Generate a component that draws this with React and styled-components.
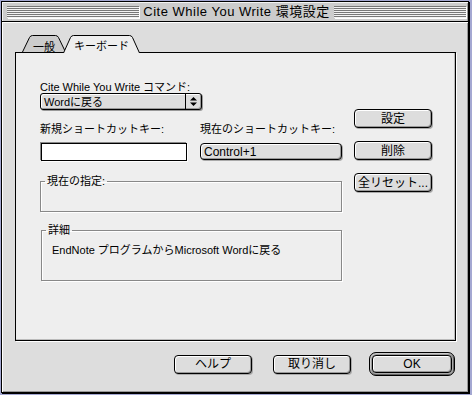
import React from 'react';
import styled, { createGlobalStyle } from 'styled-components';

const GlobalStyle = createGlobalStyle`
  html, body {
    margin: 0;
    padding: 0;
  }
  body {
    width: 472px;
    height: 395px;
    overflow: hidden;
    background: #a4a8d2;
    font-family: "Liberation Sans", "Noto Sans CJK JP", sans-serif;
    font-size: 11px;
    color: #000;
  }
`;

const Window = styled.div`
  box-sizing: border-box;
  width: 468px;
  height: 392px;
  margin: 1px 0 0 1px;
  border: 1px solid #000;
  box-shadow: 1px 1px 0 #000;
  background: #dddddd;
  display: flex;
  flex-direction: column;
`;

const TitleBar = styled.div`
  box-sizing: border-box;
  height: 20px;
  border-bottom: 1px solid #000;
  background: #cccccc;
  box-shadow: inset 1px 1px 0 #f4f4f4, inset -1px 0 0 #999;
  display: flex;
  align-items: center;
  padding: 0 2px 0 5px;
`;

const Stripes = styled.div`
  flex: 1;
  height: 12px;
  background: repeating-linear-gradient(to bottom, #777 0 1px, #f2f2f2 1px 2px);
  box-shadow: 1px 1px 0 #fff;
`;

const Title = styled.div`
  padding: 0 4px;
  font-size: 13px;
  line-height: 16px;
  letter-spacing: 0.5px;
`;

const Body = styled.div`
  flex: 1;
  box-shadow: inset 1px 1px 0 #fff, inset -1px -1px 0 #999;
  padding: 13px 11px 0 13px;
  display: flex;
  flex-direction: column;
`;

const TabRow = styled.div`
  position: relative;
  z-index: 1;
  display: flex;
  height: 18px;
  padding-left: 7px;
  margin-bottom: -1px;
`;

const TabShape = styled.svg`
  position: absolute;
  left: 0;
  top: 0;
`;

const Tab = styled.div`
  position: relative;
  width: ${(p) => p.$w}px;
  height: 18px;
  margin-left: ${(p) => (p.$first ? 0 : -3)}px;
  text-align: center;

  span {
    position: relative;
    display: block;
    padding-top: ${(p) => (p.$active ? 5 : 6)}px;
    line-height: 12px;
  }
`;

const Panel = styled.div`
  box-sizing: border-box;
  width: 441px;
  height: 289px;
  border: 1px solid #000;
  box-shadow: 1px 1px 0 #fff, inset -1px -1px 0 #bbb;
  background: #eeeeee;
  padding: 28px 0 0 24px;
  display: grid;
  grid-template-columns: 302px 78px;
  column-gap: 12px;
  align-items: start;
`;

const LeftColumn = styled.div`
  display: flex;
  flex-direction: column;
`;

const SideColumn = styled.div`
  margin-top: 28px;
  display: flex;
  flex-direction: column;
  gap: 13px;
`;

const Label = styled.div`
  line-height: 12px;
  height: 12px;
  white-space: nowrap;
`;

const Popup = styled.div`
  box-sizing: border-box;
  width: 162px;
  height: 17px;
  border: 1px solid #000;
  border-radius: 3px;
  background: #dddddd;
  box-shadow: inset 1px 1px 0 #fff, inset -1px -1px 0 #999, 1px 1px 0 #999;
  display: flex;
  align-items: center;
`;

const PopupText = styled.div`
  flex: 1;
  padding-left: 3px;
  line-height: 12px;
`;

const PopupArrow = styled.div`
  width: 15px;
  height: 100%;
  border-left: 1px solid #000;
  display: flex;
  align-items: center;
  justify-content: center;
`;

const ShortcutRow = styled.div`
  margin-top: 13px;
  display: grid;
  grid-template-columns: 160px 142px;
  row-gap: 8px;
`;

const TextInput = styled.div`
  box-sizing: border-box;
  margin-left: 1px;
  width: 146px;
  height: 18px;
  border: 1px solid #000;
  background: #fff;
  box-shadow: -1px -1px 0 #888, 1px 1px 0 #fff;
`;

const Button = styled.div`
  box-sizing: border-box;
  width: ${(p) => p.$w || 78}px;
  height: ${(p) => p.$h || 19}px;
  margin-right: ${(p) => p.$mr || 0}px;
  border: 1px solid #000;
  border-radius: 4px;
  background: #dddddd;
  box-shadow: inset 1px 1px 0 #fff, inset -1px -1px 0 #999, 1px 1px 0 #aaa;
  display: flex;
  align-items: center;
  justify-content: ${(p) => (p.$left ? 'flex-start' : 'center')};
  padding-left: ${(p) => (p.$left ? 3 : 0)}px;
  font-size: 12px;
  line-height: 14px;
  white-space: nowrap;
`;

const DefaultRing = styled.div`
  box-sizing: border-box;
  padding: 2px;
  border: 1px solid #000;
  border-radius: 7px;
  background: #999;
  box-shadow: inset 1px 1px 0 #ccc, inset -1px -1px 0 #666;
`;

const Group = styled.fieldset`
  margin: ${(p) => p.$top}px 0 0 ${(p) => p.$indent || 0}px;
  padding: 0;
  min-width: 0;
  border: 1px solid #888;
  box-shadow: 1px 1px 0 #fff, inset 1px 1px 0 #fff;

  legend {
    margin-left: 4px;
    padding: 0 2px;
    line-height: 12px;
  }
`;

const GroupBody = styled.div`
  height: ${(p) => p.$h}px;
  box-sizing: border-box;
  padding: 8px 0 0 10px;
  line-height: 12px;
`;

const Footer = styled.div`
  margin-top: 11px;
  padding-right: 2px;
  display: flex;
  justify-content: flex-end;
  align-items: center;
  gap: 18px;
`;

const UpDown = () => (
  <svg width="7" height="9" viewBox="0 0 7 9">
    <path d="M3.5 0 L7 3.5 H0 Z M0 5.5 H7 L3.5 9 Z" fill="#000" />
  </svg>
);

const tabPath = (w, active) => {
  const b = active ? 18 : 17;
  return `M0.5 ${b} L7.5 2.5 Q8.5 0.5 10.5 0.5 H${w - 10.5} Q${w - 8.5} 0.5 ${w - 7.5} 2.5 L${w - 0.5} ${b}`;
};

const TabItem = ({ w, active, first, children }) => (
  <Tab $w={w} $active={active} $first={first}>
    <TabShape width={w} height="18" viewBox={`0 0 ${w} 18`}>
      <path
        d={tabPath(w, active)}
        fill={active ? '#eeeeee' : '#cccccc'}
        stroke="#000"
        strokeWidth="1"
      />
    </TabShape>
    <span>{children}</span>
  </Tab>
);

export default function App() {
  return (
    <>
      <GlobalStyle />
      <Window>
        <TitleBar>
          <Stripes />
          <Title>Cite While You Write 環境設定</Title>
          <Stripes />
        </TitleBar>
        <Body>
          <TabRow>
            <TabItem w={44} first>一般</TabItem>
            <TabItem w={77} active>キーボード</TabItem>
          </TabRow>
          <Panel>
            <LeftColumn>
              <Label>Cite While You Write コマンド:</Label>
              <Popup>
                <PopupText>Wordに戻る</PopupText>
                <PopupArrow>
                  <UpDown />
                </PopupArrow>
              </Popup>
              <ShortcutRow>
                <Label>新規ショートカットキー:</Label>
                <Label>現在のショートカットキー:</Label>
                <TextInput />
                <Button $w={142} $h={17} $left>
                  Control+1
                </Button>
              </ShortcutRow>
              <Group $top={14}>
                <legend>現在の指定:</legend>
                <GroupBody $h={24} />
              </Group>
              <Group $top={12} $indent={1}>
                <legend>詳細</legend>
                <GroupBody $h={44}>EndNote プログラムからMicrosoft Wordに戻る</GroupBody>
              </Group>
            </LeftColumn>
            <SideColumn>
              <Button>設定</Button>
              <Button>削除</Button>
              <Button>全リセット...</Button>
            </SideColumn>
          </Panel>
          <Footer>
            <Button $mr={3}>ヘルプ</Button>
            <Button>取り消し</Button>
            <DefaultRing>
              <Button $w={80} $h={18}>
                OK
              </Button>
            </DefaultRing>
          </Footer>
        </Body>
      </Window>
    </>
  );
}
